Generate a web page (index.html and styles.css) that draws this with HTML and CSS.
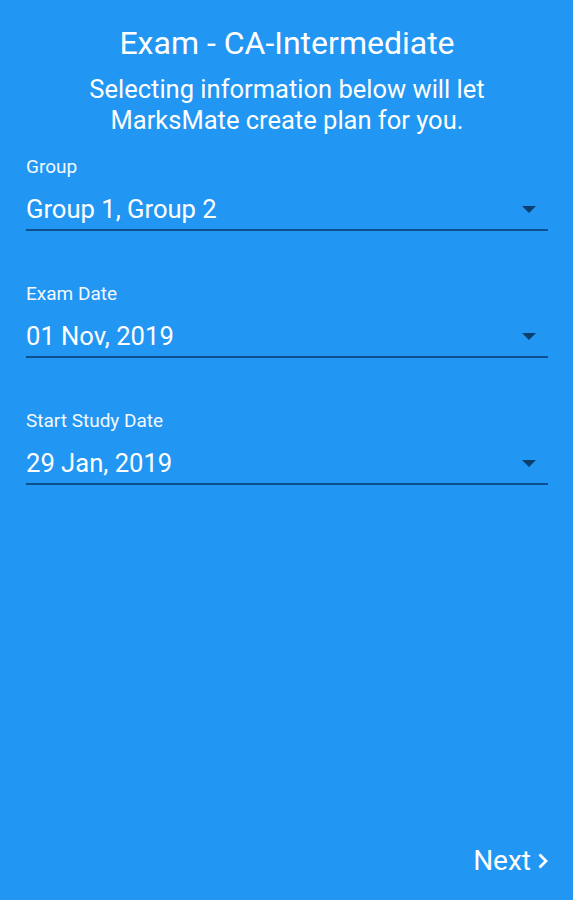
FILE: index.html
```html
<!DOCTYPE html>
<html>
<head>
<meta charset="utf-8">
<link rel="stylesheet" href="styles.css">
</head>
<body>
<div class="screen">
  <header class="head">
    <h1 class="title">Exam - CA-Intermediate</h1>
    <p class="subtitle">Selecting information below will let<br>MarksMate create plan for you.</p>
  </header>
  <div class="fields">
    <div class="field">
      <div class="label">Group</div>
      <div class="select">
        <span class="value">Group 1, Group 2</span>
        <svg class="caret" width="14" height="7" viewBox="0 0 14 7"><path d="M0 0h14L7 7z"/></svg>
      </div>
    </div>
    <div class="field">
      <div class="label">Exam Date</div>
      <div class="select">
        <span class="value">01 Nov, 2019</span>
        <svg class="caret" width="14" height="7" viewBox="0 0 14 7"><path d="M0 0h14L7 7z"/></svg>
      </div>
    </div>
    <div class="field">
      <div class="label">Start Study Date</div>
      <div class="select">
        <span class="value">29 Jan, 2019</span>
        <svg class="caret" width="14" height="7" viewBox="0 0 14 7"><path d="M0 0h14L7 7z"/></svg>
      </div>
    </div>
  </div>
  <div class="spacer"></div>
  <footer class="foot">
    <button class="next">Next
      <svg class="chev" width="11" height="16" viewBox="0 0 11 16"><path d="M2.5 1.5l6.5 6.5-6.5 6.5" fill="none" stroke="#fff" stroke-width="2.8"/></svg>
    </button>
  </footer>
</div>
</body>
</html>
```
FILE: styles.css
```css
html, body {
  margin: 0;
  padding: 0;
  background: #2196f3;
}
body {
  font-family: Roboto, "Noto Sans", sans-serif;
  color: #fff;
}
.screen {
  height: 900px;
  display: flex;
  flex-direction: column;
  padding: 0 25px 0 26px;
  box-sizing: border-box;
}
.head {
  text-align: center;
  padding-top: 25px;
}
.title {
  margin: 0;
  font-size: 32px;
  font-weight: 400;
  line-height: 36px;
}
.subtitle {
  margin: 13px 0 0;
  font-size: 25.5px;
  line-height: 31px;
}
.fields {
  margin-top: 20px;
  display: flex;
  flex-direction: column;
  gap: 52px;
}
.field {
  display: flex;
  flex-direction: column;
}
.label {
  font-size: 19px;
  line-height: 22px;
  color: #f4f9ff;
}
.select {
  display: flex;
  align-items: center;
  justify-content: space-between;
  height: 53px;
  border-bottom: 2px solid #0b4f8f;
  box-sizing: border-box;
  padding-top: 11px;
}
.value {
  font-size: 25.6px;
}
.caret {
  fill: #0d3f6e;
  margin-right: 12px;
}
.spacer {
  flex: 1;
}
.foot {
  display: flex;
  justify-content: flex-end;
  padding-bottom: 23px;
}
.next {
  background: none;
  border: 0;
  padding: 0;
  color: #fff;
  font-family: inherit;
  font-size: 28px;
  display: flex;
  align-items: center;
  gap: 6px;
}
```
